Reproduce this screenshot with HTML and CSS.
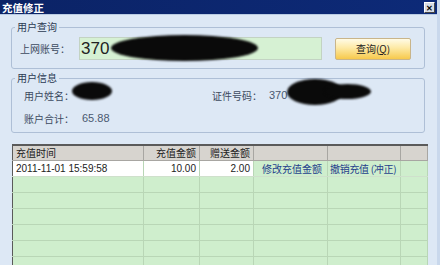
FILE: index.html
```html
<!DOCTYPE html>
<html lang="zh-CN">
<head>
    <meta charset="UTF-8">
    <title>充值修正</title>
    <link rel="stylesheet" href="styles.css">
</head>
<body>
    <div class="window">
        <div class="titlebar">
            <span class="title">充值修正</span>
            <span class="close-btn">✕</span>
        </div>

        <div class="content">
            <fieldset class="group">
                <legend>用户查询</legend>
                <div class="query-row">
                    <span class="label query-label">上网账号：</span>
                    <div class="account-input">
                        <span class="account-text">370</span>
                        <span class="redact redact-account"></span>
                    </div>
                    <button class="query-btn">查询(<u>Q</u>)</button>
                </div>
            </fieldset>

            <fieldset class="group">
                <legend>用户信息</legend>
                <div class="info">
                    <div class="info-row">
                        <span class="label">用户姓名：</span>
                        <span class="redact redact-name"></span>
                        <span class="label id-label">证件号码：</span>
                        <span class="value">370</span>
                        <span class="redact redact-id"></span>
                        <span class="redact redact-id-tail"></span>
                    </div>
                    <div class="info-row">
                        <span class="label">账户合计：</span>
                        <span class="value amount">65.88</span>
                    </div>
                </div>
            </fieldset>

            <table class="grid">
                <thead>
                    <tr>
                        <th class="col-time">充值时间</th>
                        <th class="col-num">充值金额</th>
                        <th class="col-num2">赠送金额</th>
                        <th class="col-op1"></th>
                        <th class="col-op2"></th>
                        <th></th>
                    </tr>
                </thead>
                <tbody>
                    <tr class="data-row">
                        <td class="cell-white">2011-11-01 15:59:58</td>
                        <td class="cell-white num">10.00</td>
                        <td class="cell-white num">2.00</td>
                        <td class="link">修改充值金额</td>
                        <td class="link link-undo">撤销充值 (冲正)</td>
                        <td></td>
                    </tr>
                    <tr><td></td><td></td><td></td><td></td><td></td><td></td></tr>
                    <tr><td></td><td></td><td></td><td></td><td></td><td></td></tr>
                    <tr><td></td><td></td><td></td><td></td><td></td><td></td></tr>
                    <tr><td></td><td></td><td></td><td></td><td></td><td></td></tr>
                    <tr><td></td><td></td><td></td><td></td><td></td><td></td></tr>
                    <tr><td></td><td></td><td></td><td></td><td></td><td></td></tr>
                </tbody>
            </table>
        </div>
    </div>
</body>
</html>
```

FILE: styles.css
```css
body {
    margin: 0;
    font-family: "Noto Sans CJK SC", "Liberation Sans", sans-serif;
    font-size: 10px;
    color: #333;
    background: #dde8f5;
}

.window {
    width: 440px;
    height: 265px;
    overflow: hidden;
    background: #dde8f5;
    border-right: 3px solid #c9d8ec;
    box-sizing: border-box;
}

/* Title bar */
.titlebar {
    display: flex;
    align-items: center;
    justify-content: space-between;
    height: 15px;
    padding: 0 2px 0 2px;
    background: linear-gradient(to right, #0b2366, #0d2a78);
    border-bottom: 1px solid #b9cbe2;
    box-sizing: border-box;
}

.title {
    color: #fff;
    font-weight: bold;
    font-size: 10.5px;
    line-height: 15px;
}

.close-btn {
    width: 11px;
    height: 11px;
    margin-top: 1px;
    background: #d8dce4;
    border: 1px solid #fff;
    border-right-color: #444;
    border-bottom-color: #444;
    color: #000;
    font-size: 8px;
    font-weight: bold;
    line-height: 10px;
    text-align: center;
    box-sizing: border-box;
}

/* Main */
.content {
    padding: 5px 12px 0 11px;
}

.group {
    margin: 0;
    padding: 0;
    border: 1px solid #aebfd6;
    border-radius: 3px;
}

.group + .group {
    margin-top: 2px;
}

.group legend {
    margin-left: 3px;
    padding: 0 2px;
    font-size: 10px;
    line-height: 14px;
    color: #2b3a52;
}

.label {
    color: #3c4a60;
    white-space: nowrap;
}

/* Query */
.query-row {
    display: flex;
    align-items: center;
    padding: 3px 0 8px 8px;
}

.query-label {
    width: 59px;
}

.account-input {
    display: flex;
    align-items: center;
    position: relative;
    width: 243px;
    height: 23px;
    background: #d6f1d3;
    border: 1px solid #c3d3c3;
    box-sizing: border-box;
}

.account-text {
    padding-left: 1px;
    font-family: "Liberation Sans", sans-serif;
    font-size: 17px;
    color: #222;
}

.query-btn {
    margin-left: 13px;
    width: 76px;
    height: 22px;
    padding: 0;
    font-family: "Noto Sans CJK SC", sans-serif;
    font-size: 10px;
    color: #222;
    background: linear-gradient(to bottom, #fffbe6, #fde9a4 45%, #f7c94c);
    border: 1px solid #c9b58a;
    border-radius: 2px;
}

/* Info */
.info {
    padding: 1px 0 5px 12px;
}

.info-row {
    display: flex;
    align-items: center;
    position: relative;
    height: 18px;
}

.info-row + .info-row {
    margin-top: 5px;
}

.id-label {
    margin-left: 138px;
}

.value {
    color: #4a5870;
    font-family: "Liberation Sans", sans-serif;
    font-size: 11px;
}

.id-label + .value {
    margin-left: 7px;
}

.amount {
    margin-left: 8px;
}

/* Redaction scribbles */
.redact {
    position: absolute;
    background: #0a0a0a;
    border-radius: 50%;
    filter: blur(1.2px);
}

.redact-account {
    left: 31px;
    top: -3px;
    width: 147px;
    height: 26px;
}

.redact-name {
    left: 48px;
    top: -4px;
    width: 40px;
    height: 18px;
}

.redact-id {
    left: 263px;
    top: -7px;
    width: 56px;
    height: 26px;
}

.redact-id-tail {
    left: 300px;
    top: -2px;
    width: 47px;
    height: 15px;
}

/* Grid */
.grid {
    margin-top: 11px;
    margin-left: 1px;
    width: 416px;
    border-collapse: collapse;
    table-layout: fixed;
    border-top: 2px solid #5a5a5a;
    border-left: 1px solid #5a5a5a;
    background: #cfeecd;
}

.grid th {
    height: 14px;
    padding: 0 3px;
    background: #d7d4cf;
    border-right: 1px solid #a8a6a2;
    border-bottom: 1px solid #a8a6a2;
    font-weight: normal;
    font-size: 10px;
    line-height: 14px;
    color: #222;
    text-align: right;
    white-space: nowrap;
}

.grid th.col-time {
    width: 124px;
    text-align: left;
}

.grid .col-num {
    width: 49px;
}

.grid .col-num2 {
    width: 47px;
}

.grid .col-op1 {
    width: 67px;
}

.grid .col-op2 {
    width: 66px;
}

.grid td {
    height: 15px;
    padding: 0 3px;
    border-right: 1px solid #b9d6b6;
    border-bottom: 1px solid #b9d6b6;
    font-size: 10px;
    line-height: 14px;
    white-space: nowrap;
    overflow: hidden;
}

.grid td.cell-white {
    background: #fff;
    color: #222;
    font-family: "Liberation Sans", sans-serif;
}

.grid td.num {
    text-align: right;
}

.grid td.link {
    padding-left: 8px;
    color: #24408c;
}

.grid td.link-undo {
    padding: 0 0 0 2px;
    letter-spacing: -0.3px;
}

.data-row td {
    border-bottom-color: #cfe0cc;
}
```
